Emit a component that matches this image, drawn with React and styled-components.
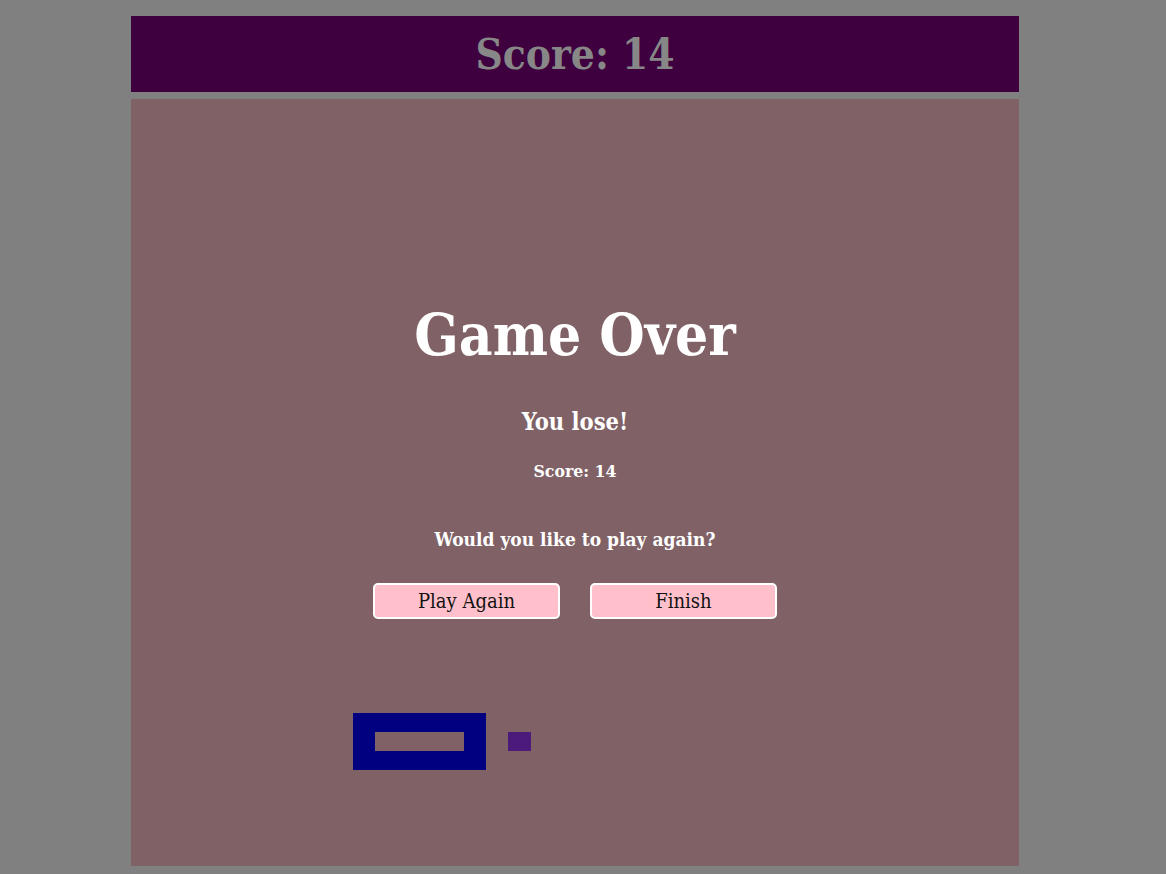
import styled, { createGlobalStyle } from 'styled-components';

const GlobalStyle = createGlobalStyle`
  body {
    margin: 0;
    background-color: #808080;
    font-family: "DejaVu Serif Condensed", "DejaVu Serif", "Liberation Serif", serif;
  }
`;

const Page = styled.div`
  width: 888px;
  padding: 16px 0 8px 131px;
  display: flex;
  flex-direction: column;
  gap: 7px;
`;

const ScoreBar = styled.header`
  height: 76px;
  background-color: #3e003e;
  color: #878787;
  display: flex;
  align-items: center;
  justify-content: center;
  font-size: 42px;
  font-weight: bold;
`;

const Board = styled.main`
  position: relative;
  height: 767px;
  background-color: #806266;
  display: flex;
  flex-direction: column;
  align-items: center;
  padding-top: 200px;
  box-sizing: border-box;
  color: #ffffff;
`;

const Title = styled.h1`
  margin: 0;
  font-size: 58px;
  font-weight: bold;
  line-height: 72px;
`;

const Result = styled.h2`
  margin: 37px 0 0;
  font-size: 23.5px;
  line-height: 28px;
`;

const FinalScore = styled.p`
  margin: 24px 0 0;
  font-size: 17.5px;
  font-weight: bold;
  line-height: 22px;
`;

const Question = styled.p`
  margin: 45px 0 0;
  font-size: 19px;
  font-weight: bold;
  line-height: 24px;
`;

const Buttons = styled.div`
  display: flex;
  gap: 30px;
  margin-top: 32px;
`;

const Button = styled.button`
  width: 187px;
  height: 36px;
  background-color: #ffc0cb;
  border: 2px solid #ffffff;
  border-radius: 5px;
  font-family: inherit;
  font-size: 20px;
  color: #111111;
  cursor: pointer;
`;

const Paddle = styled.div`
  position: absolute;
  left: 222px;
  top: 614px;
  width: 89px;
  height: 19px;
  border-style: solid;
  border-color: #000080;
  border-width: 19px 22px;
`;

const Ball = styled.div`
  position: absolute;
  left: 377px;
  top: 633px;
  width: 23px;
  height: 19px;
  background-color: #4b1a7a;
`;

export default function App() {
  return (
    <>
      <GlobalStyle />
      <Page>
        <ScoreBar>Score: 14</ScoreBar>
        <Board>
          <Title>Game Over</Title>
          <Result>You lose!</Result>
          <FinalScore>Score: 14</FinalScore>
          <Question>Would you like to play again?</Question>
          <Buttons>
            <Button>Play Again</Button>
            <Button>Finish</Button>
          </Buttons>
          <Paddle />
          <Ball />
        </Board>
      </Page>
    </>
  );
}
